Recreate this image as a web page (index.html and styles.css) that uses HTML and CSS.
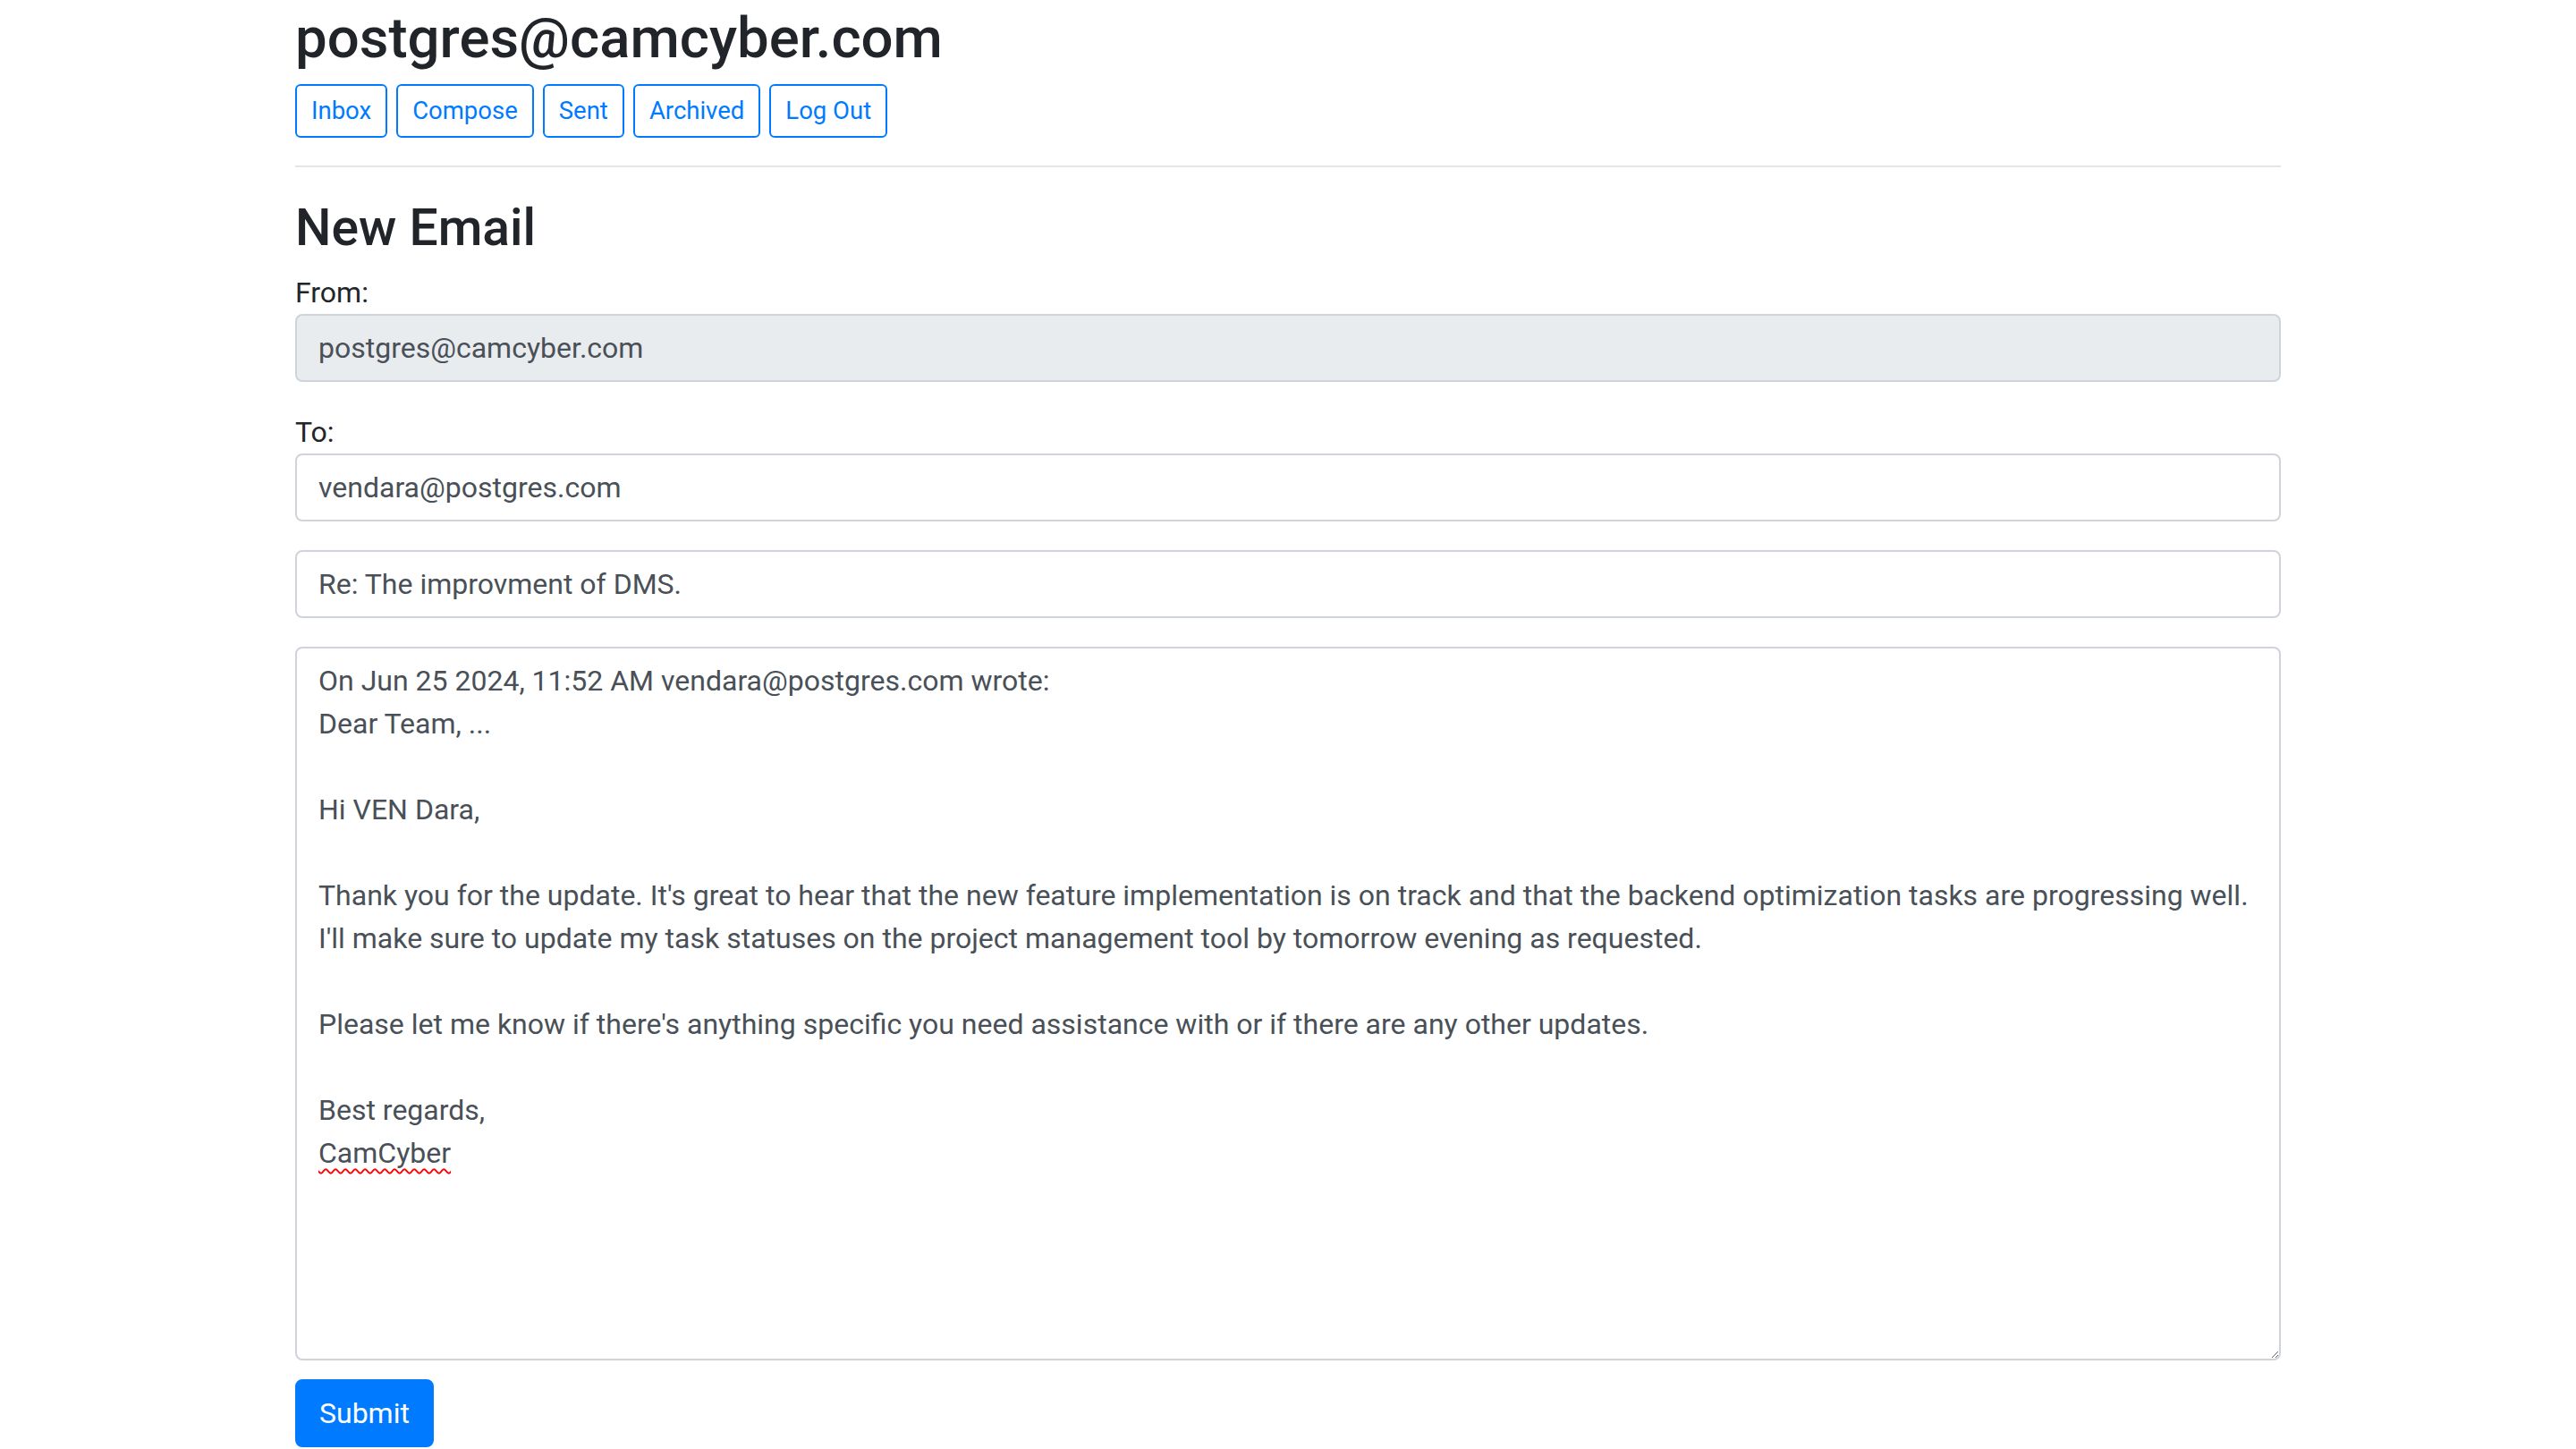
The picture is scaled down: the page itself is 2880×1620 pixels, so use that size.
FILE: index.html
```html
<!DOCTYPE html>
<html lang="en">
<head>
<meta charset="utf-8">
<title>New Email</title>
<link rel="stylesheet" href="styles.css">
</head>
<body>
<div class="container">
  <h1 class="title">postgres@camcyber.com</h1>
  <nav class="nav-buttons">
    <a class="btn-outline" href="#">Inbox</a>
    <a class="btn-outline" href="#">Compose</a>
    <a class="btn-outline" href="#">Sent</a>
    <a class="btn-outline" href="#">Archived</a>
    <a class="btn-outline" href="#">Log Out</a>
  </nav>
  <hr class="divider">
  <h2 class="section-title">New Email</h2>
  <form class="compose-form">
    <div class="form-group">
      <label class="form-label" for="from">From:</label>
      <input class="form-control readonly" id="from" type="text" value="postgres@camcyber.com" readonly>
    </div>
    <div class="form-group">
      <label class="form-label" for="to">To:</label>
      <input class="form-control" id="to" type="text" value="vendara@postgres.com">
    </div>
    <div class="form-group">
      <input class="form-control" id="subject" type="text" value="Re: The improvment of DMS.">
    </div>
    <div class="form-group body-group">
      <div class="form-control body-area">On Jun 25 2024, 11:52 AM vendara@postgres.com wrote:
Dear Team, ...

Hi VEN Dara,

Thank you for the update. It's great to hear that the new feature implementation is on track and that the backend optimization tasks are progressing well.
I'll make sure to update my task statuses on the project management tool by tomorrow evening as requested.

Please let me know if there's anything specific you need assistance with or if there are any other updates.

Best regards,
<span class="misspelled">CamCyber</span></div>
    </div>
    <button class="btn-primary" type="button">Submit</button>
  </form>
</div>
</body>
</html>
```
FILE: styles.css
```css
* { box-sizing: border-box; }

html, body {
  margin: 0;
  padding: 0;
  background: #fff;
}

body {
  font-family: Roboto, "Liberation Sans", sans-serif;
  font-size: 32px;
  line-height: 1.5;
  color: #212529;
}

.container {
  max-width: 2280px;
  margin: 0 auto;
  padding: 0 30px;
}

.title {
  margin: 4px 0 13px;
  font-size: 63.5px;
  font-weight: 500;
  line-height: 77px;
  color: #212529;
}

.nav-buttons {
  display: flex;
  gap: 10px;
}

.btn-outline {
  display: inline-block;
  height: 60px;
  padding: 0 16px;
  border: 2px solid #007bff;
  border-radius: 6px;
  color: #007bff;
  font-size: 27.5px;
  line-height: 56px;
  text-decoration: none;
  background: #fff;
}

.divider {
  margin: 31px 0 0;
  border: 0;
  border-top: 2px solid rgba(0, 0, 0, 0.1);
  height: 0;
}

.section-title {
  margin: 32px 0 12px;
  font-size: 57px;
  font-weight: 500;
  line-height: 72px;
  color: #212529;
}

.compose-form {
  display: flex;
  flex-direction: column;
  align-items: flex-start;
}

.form-group {
  width: 100%;
  margin-bottom: 32px;
}

.form-label {
  display: block;
  line-height: 48px;
  color: #212529;
}

.form-control {
  display: block;
  width: 100%;
  height: 76px;
  padding: 12px 24px;
  border: 2px solid #ced4da;
  border-radius: 8px;
  font-family: inherit;
  font-size: 32px;
  line-height: 48px;
  color: #495057;
  background: #fff;
  outline: none;
}

.form-control.readonly {
  background: #e9ecef;
}

.body-group {
  margin-bottom: 21px;
}

.body-area {
  height: 798px;
  white-space: pre-wrap;
  overflow: auto;
  resize: vertical;
}

.misspelled {
  text-decoration: underline wavy #ff0000;
  text-decoration-thickness: 2px;
  text-underline-offset: 6px;
  text-decoration-skip-ink: none;
}

.btn-primary {
  height: 76px;
  padding: 0 25px;
  border: 2px solid #007bff;
  border-radius: 8px;
  background: #007bff;
  color: #fff;
  font-family: inherit;
  font-size: 32px;
  line-height: 72px;
  cursor: pointer;
}
```
